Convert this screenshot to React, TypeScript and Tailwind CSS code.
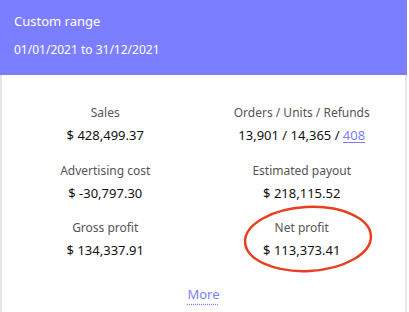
import React from 'react';

type Stat = {
  label: string;
  value: React.ReactNode;
  circled?: boolean;
};

const stats: Stat[] = [
  { label: 'Sales', value: '$ 428,499.37' },
  {
    label: 'Orders / Units / Refunds',
    value: (
      <>
        13,901 / 14,365 /{' '}
        <a href="#" className="text-[#7b7fff] underline underline-offset-2">
          408
        </a>
      </>
    ),
  },
  { label: 'Advertising cost', value: '$ -30,797.30' },
  { label: 'Estimated payout', value: '$ 218,115.52' },
  { label: 'Gross profit', value: '$ 134,337.91' },
  { label: 'Net profit', value: '$ 113,373.41', circled: true },
];

export default function App() {
  return (
    <div
      className="w-[409px] h-[312px] overflow-hidden bg-white"
      style={{ fontFamily: '"Noto Sans", "Open Sans", sans-serif' }}
    >
      <div className="w-[407px] min-h-[330px] border-x-2 border-[#e6e6e6] bg-white">
        <div className="-mx-[2px] h-[75px] bg-[#7b7fff] px-[14px] pt-[11px] text-white">
          <div className="text-[13px] leading-[20px]">Custom range</div>
          <div className="mt-[10px] text-[12px] leading-[18px]">01/01/2021 to 31/12/2021</div>
        </div>
        <div className="px-[5px] pt-[29px]">
          <div className="grid grid-cols-2 gap-y-[17.5px]">
            {stats.map((s) => (
              <div key={s.label} className="relative flex flex-col items-center">
                <div className="text-[12px] leading-[18px] text-[#555]">{s.label}</div>
                <div className="mt-[4px] text-[13px] leading-[18px] text-[#111]">{s.value}</div>
                {s.circled && (
                  <svg
                    className="pointer-events-none absolute left-[38px] top-[-15px]"
                    width="132"
                    height="70"
                    viewBox="0 0 132 70"
                  >
                    <ellipse
                      cx="66"
                      cy="35"
                      rx="63"
                      ry="32"
                      transform="rotate(-3 66 35)"
                      fill="none"
                      stroke="#e8401f"
                      strokeWidth="2.5"
                    />
                  </svg>
                )}
              </div>
            ))}
          </div>
          <div className="mt-[26px] flex justify-center">
            <a
              href="#"
              className="text-[13px] leading-[18px] text-[#7b7fff] underline decoration-dotted underline-offset-[5px]"
            >
              More
            </a>
          </div>
        </div>
      </div>
    </div>
  );
}
